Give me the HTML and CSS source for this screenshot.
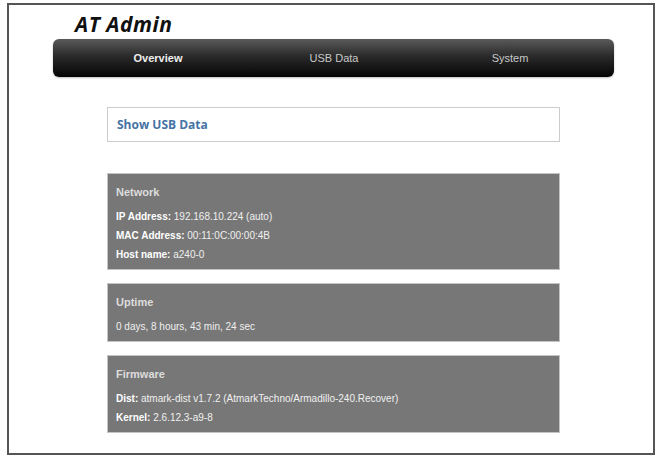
FILE: index.html
```html
<!DOCTYPE html>
<html>
<head>
<meta charset="utf-8">
<link rel="stylesheet" href="styles.css">
</head>
<body>
<div class="frame">
  <h1 class="title">AT Admin</h1>
  <nav class="nav">
    <a class="nav-item active">Overview</a>
    <a class="nav-item">USB Data</a>
    <a class="nav-item">System</a>
  </nav>
  <div class="content">
    <div class="link-box"><a class="link">Show USB Data</a></div>
    <section class="panel panel-network">
      <h2 class="panel-title">Network</h2>
      <div class="row"><b>IP Address:</b> 192.168.10.224 (auto)</div>
      <div class="row"><b>MAC Address:</b> 00:11:0C:00:00:4B</div>
      <div class="row"><b>Host name:</b> a240-0</div>
    </section>
    <section class="panel">
      <h2 class="panel-title">Uptime</h2>
      <div class="row">0 days, 8 hours, 43 min, 24 sec</div>
    </section>
    <section class="panel">
      <h2 class="panel-title">Firmware</h2>
      <div class="row"><b>Dist:</b> atmark-dist v1.7.2 (AtmarkTechno/Armadillo-240.Recover)</div>
      <div class="row"><b>Kernel:</b> 2.6.12.3-a9-8</div>
    </section>
  </div>
</div>
</body>
</html>
```

FILE: styles.css
```css
html, body {
  margin: 0;
  padding: 0;
  background: #ffffff;
}

.frame {
  box-sizing: border-box;
  width: 648px;
  height: 452px;
  margin: 3px 0 0 7px;
  border: 2px solid #555;
  padding-top: 6px;
  font-family: "Liberation Sans", Arial, sans-serif;
}

.title {
  margin: 0 0 2px 66px;
  font-family: "Open Sans", sans-serif;
  font-weight: 700;
  font-style: italic;
  font-size: 21px;
  line-height: 26px;
  color: #111;
  letter-spacing: 0.5px;
}

.nav {
  display: flex;
  box-sizing: border-box;
  width: 561px;
  height: 38px;
  margin-left: 44px;
  padding-left: 17px;
  border-radius: 6px;
  background: linear-gradient(to bottom, #5a5a5a 0%, #2a2a2a 45%, #050505 100%);
  box-shadow: 0 1px 2px rgba(0,0,0,0.25);
  align-items: center;
}

.nav-item {
  width: 176px;
  text-align: center;
  font-size: 11px;
  color: #c8c8c8;
}

.nav-item.active {
  font-weight: 700;
  color: #eeeeee;
}

.content {
  display: flex;
  flex-direction: column;
  margin-left: 98px;
  width: 453px;
  padding-top: 30px;
}

.link-box {
  box-sizing: border-box;
  height: 35px;
  border: 1px solid #cccccc;
  padding-left: 9px;
  display: flex;
  align-items: center;
  margin-bottom: 31px;
}

.link {
  font-family: "Open Sans", sans-serif;
  font-weight: 700;
  font-size: 12px;
  color: #4573a5;
}

.panel {
  background: #777777;
  border: 1px solid #c4c4c4;
  margin-bottom: 13px;
  padding: 9px 8px 5px 8px;
  color: #f0f0f0;
  font-size: 10px;
}

.panel-title {
  margin: 0 0 6px 0;
  font-size: 11px;
  line-height: 18px;
  font-weight: 700;
  color: #dddddd;
}

.row {
  line-height: 19px;
  white-space: nowrap;
}

.row b {
  color: #ffffff;
}
```
